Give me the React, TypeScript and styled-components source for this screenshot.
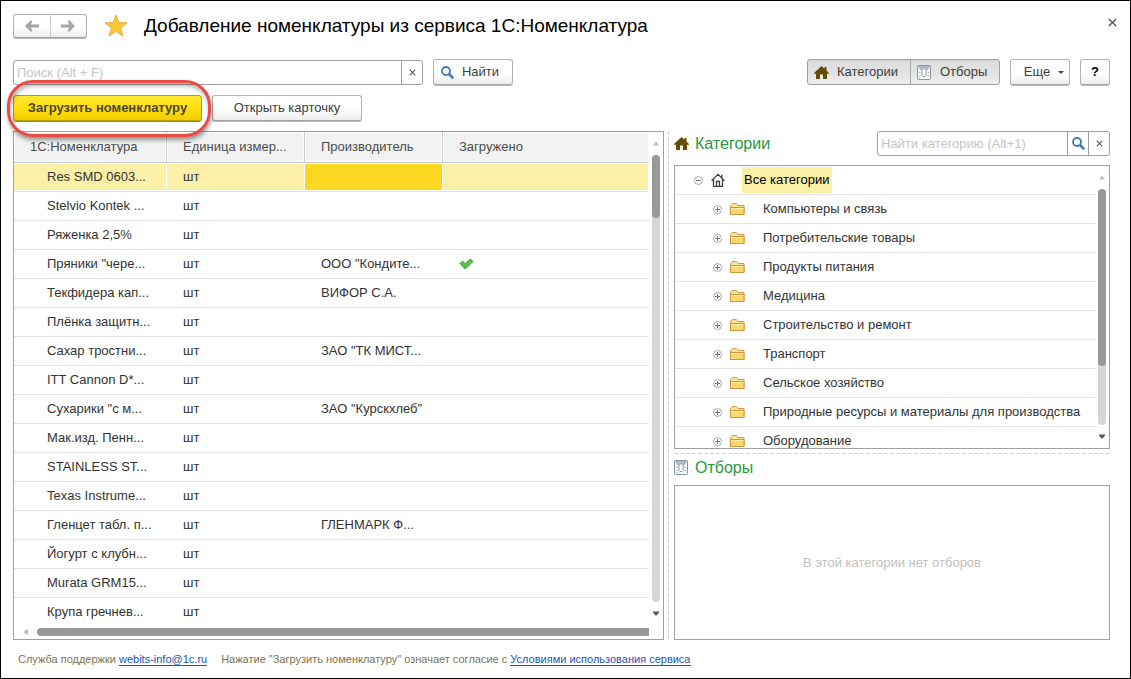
import React from 'react';
import styled, { createGlobalStyle, css } from 'styled-components';

const GlobalStyle = createGlobalStyle`
  *, *::before, *::after { box-sizing: border-box; }
  body {
    margin: 0;
    background: #fff;
    color: #333;
    font: 13px/16px "Liberation Sans", Arial, sans-serif;
  }
  button, input { font: inherit; color: inherit; }
  button { cursor: pointer; }
  svg { display: block; flex: none; }
`;

const Window = styled.div`
  display: flex;
  flex-direction: column;
  height: 100vh;
  min-height: 480px;
  padding: 12px 20px 0 12px;
  border: 1px solid #000;
`;

const TitleBar = styled.header`
  display: flex;
  align-items: center;
  height: 26px;
  margin-right: -12px;
`;

const raised = css`
  border: 1px solid #b2b2b2;
  border-bottom-color: #a0a0a0;
  border-radius: 3px;
  background: linear-gradient(#fff 50%, #eee);
  box-shadow: 0 1px 0 #bbb;
`;

const NavGroup = styled.nav`
  ${raised}
  display: flex;
  width: 74px;
  height: 24px;
`;

const NavButton = styled.button`
  display: flex;
  flex: 1;
  align-items: center;
  justify-content: center;
  padding: 0;
  border: 0;
  background: none;
  & + & { border-left: 1px solid #ccc; }
`;

const StarButton = styled.button`
  margin-left: 17px;
  padding: 0;
  border: 0;
  background: none;
`;

const Title = styled.h1`
  flex: 1;
  margin: 0 0 0 16px;
  color: #000;
  font-size: 19px;
  line-height: 26px;
  font-weight: 400;
`;

const CloseButton = styled.button`
  align-self: flex-start;
  padding: 5px;
  border: 0;
  background: none;
`;

const Toolbar = styled.div`
  display: flex;
  align-items: flex-end;
  gap: 10px;
  height: 26px;
  margin-top: 20px;
`;

const CommandRow = styled.div`
  display: flex;
  gap: 10px;
  height: 26px;
  margin: 10px 0;
`;

const Spacer = styled.span`
  flex: 1;
`;

const SearchBox = styled.div<{ $width: number }>`
  display: flex;
  width: ${(p) => p.$width}px;
  height: 25px;
  overflow: hidden;
  border: 1px solid #a0a0a0;
  border-radius: 3px;
  background: #fff;
`;

const SearchInput = styled.input`
  flex: 1;
  min-width: 0;
  padding: 0 3px;
  border: 0;
  outline: 0;
  background: none;
  &::placeholder { color: #c4c4c4; opacity: 1; }
`;

const BoxButton = styled.button`
  display: flex;
  align-items: center;
  justify-content: center;
  width: 21px;
  padding: 0;
  border: 0;
  border-left: 1px solid #a0a0a0;
  background: none;
`;

const Button = styled.button<{ $width: number }>`
  ${raised}
  display: flex;
  align-items: center;
  justify-content: center;
  gap: 8px;
  width: ${(p) => p.$width}px;
  height: 26px;
  padding: 0;
  color: #404040;
`;

const FindButton = styled(Button)`
  padding-right: 6px;
`;

const MoreButton = styled(Button)`
  padding-left: 8px;
`;

const PrimaryButton = styled(Button)`
  border-color: #b39b00;
  background: linear-gradient(#ffe833, #ffdf0e 50%, #f3cd00);
  box-shadow: 0 1px 0 #a08c20;
  color: #4d4632;
  font-weight: 700;
`;

const HelpButton = styled(Button)`
  color: #000;
  font-weight: 700;
`;

const Highlighted = styled.div`
  position: relative;
  &::after {
    content: "";
    position: absolute;
    inset: -15px -9px -16px -6px;
    border: 3px solid #e94b47;
    border-radius: 26px;
    box-shadow: 1px 3px 4px rgba(0, 0, 0, 0.4), inset 1px 3px 4px rgba(0, 0, 0, 0.3);
    pointer-events: none;
  }
`;

const ToggleGroup = styled.div`
  display: flex;
  height: 26px;
  border: 1px solid #a0a0a0;
  border-radius: 3px;
  background: linear-gradient(#d2d2d2, #dedede 10%, #e2e2e2 50%, #eee);
`;

const Toggle = styled.button<{ $width: number }>`
  display: flex;
  align-items: center;
  gap: 8px;
  width: ${(p) => p.$width}px;
  padding: 0 0 0 6px;
  border: 0;
  background: none;
  color: #404040;
  & + & { border-left: 1px solid #a8a8a8; }
`;

const Main = styled.main`
  display: grid;
  flex: 1;
  grid-template-columns: minmax(0, 651fr) 10px minmax(0, 436fr);
  min-height: 0;
`;

const Splitter = styled.div`
  width: 1px;
  margin-left: 4px;
  background: repeating-linear-gradient(#d0d0d0 0 4px, transparent 4px 6px);
`;

const TablePanel = styled.section`
  display: flex;
  flex-direction: column;
  min-height: 0;
  border: 1px solid #a0a0a0;
`;

const ScrollRow = styled.div`
  display: flex;
  flex: 1;
  min-height: 0;
`;

const ScrollArea = styled.div`
  flex: 1;
  min-width: 0;
  overflow: hidden;
`;

const Table = styled.table`
  width: 100%;
  table-layout: fixed;
  border-spacing: 0;
`;

const Th = styled.th<{ $width?: number }>`
  width: ${(p) => (p.$width ? `${p.$width}px` : 'auto')};
  height: 31px;
  padding: 0 16px;
  overflow: hidden;
  border-right: 1px solid #ccc;
  border-bottom: 1px solid #c4c4c4;
  background: #f2f2f2;
  box-shadow: inset 0 0 0 1px #fff;
  color: #4d4d4d;
  font-weight: 400;
  text-align: left;
  white-space: nowrap;
  &:last-child { border-right: 0; }
`;

const Td = styled.td<{ $current?: boolean }>`
  height: 29px;
  padding: 0 0 0 16px;
  overflow: hidden;
  border-bottom: 1px solid #e2e2e2;
  white-space: nowrap;
  &:first-child { padding-left: 33px; }
  ${(p) => p.$current && css`background: #fcd920 !important;`}
`;

const Tr = styled.tr<{ $selected?: boolean }>`
  ${(p) => p.$selected && css`
    ${Td} {
      background: #fcf0a6;
      box-shadow: inset -1px -1px 0 #fff, inset 0 1px 0 #fff;
    }
  `}
`;

const VBar = styled.div`
  display: flex;
  flex-direction: column;
  align-items: center;
  width: 14px;
  padding: 9px 1px 9px 0;
  gap: 9px;
`;

const Track = styled.div`
  flex: 1;
  width: 8px;
  border-radius: 4px;
  background: #d6d6d6;
`;

const Thumb = styled.div<{ $size: string }>`
  height: ${(p) => p.$size};
  border-radius: 4px;
  background: #999;
`;

const HBar = styled.div`
  display: flex;
  align-items: center;
  gap: 9px;
  height: 14px;
  padding: 0 14px 0 9px;
`;

const HThumb = styled.div`
  flex: 1;
  height: 8px;
  border-radius: 4px 0 0 4px;
  background: #999;
`;

const Side = styled.aside`
  display: flex;
  flex-direction: column;
  min-width: 0;
  min-height: 0;
`;

const SideHead = styled.div`
  display: flex;
  align-items: center;
  height: 25px;
  margin-bottom: 9px;
`;

const SideTitle = styled.h2`
  flex: 1;
  margin: 0 0 0 6px;
  color: #1f9a3e;
  font-size: 16px;
  line-height: 20px;
  font-weight: 400;
`;

const TreePanel = styled.div`
  display: flex;
  flex: 285 1 0;
  min-height: 0;
  border: 1px solid #a0a0a0;
`;

const Tree = styled.ul`
  margin: 0;
  padding: 0;
  list-style: none;
`;

const Node = styled.li<{ $root?: boolean }>`
  display: flex;
  align-items: center;
  height: 29px;
  padding-left: ${(p) => (p.$root ? 19 : 38)}px;
  border-bottom: 1px solid #e2e2e2;
  white-space: nowrap;
`;

const Expander = styled.button`
  margin-right: 8px;
  padding: 0;
  border: 0;
  background: none;
`;

const RootLabel = styled.span`
  margin-left: 17px;
  padding: 5px 3px 5px 2px;
  background: #fcf0a6;
  color: #000;
`;

const NodeLabel = styled.span`
  margin-left: 18px;
`;

const HSplitter = styled.div`
  flex: none;
  height: 1px;
  margin: 4px 0 1px;
  background: repeating-linear-gradient(90deg, #d0d0d0 0 4px, transparent 4px 6px);
`;

const FilterPanel = styled.div`
  display: flex;
  flex: 154 1 0;
  align-items: center;
  justify-content: center;
  min-height: 0;
  border: 1px solid #a0a0a0;
  color: #c0c0c0;
`;

const FilterHead = styled(SideHead)`
  margin-bottom: 5px;
`;

const Footer = styled.footer`
  display: flex;
  gap: 14px;
  height: 38px;
  padding: 12px 0 0 5px;
  color: #7b7452;
  font-size: 11px;
  line-height: 14px;
  white-space: nowrap;
`;

const Link = styled.a`
  border-bottom: 1px solid #1d55b4;
  color: #1d55b4;
  text-decoration: none;
`;

const Arrow = ({ flip }: { flip?: boolean }) => (
  <svg width="14" height="12" viewBox="0 0 14 12" fill="#a6a6a6">
    <path d={flip ? 'M0 4.500h8L6.500.5h2L14 6l-5.500 5.500h-2L8 7.500H0z' : 'M14 4.500H6L7.500.5h-2L0 6l5.500 5.500h2L6 7.500h8z'} />
  </svg>
);

const Star = () => (
  <svg width="24" height="24" viewBox="0 0 24 24">
    <path d="M12 1l2.800 7.600 8.200.3-6.400 5.100 2.300 8-6.900-4.600L5.100 22l2.300-8L1 8.900l8.200-.3z" fill="#fcc934" stroke="#dfae45" strokeWidth="1" />
  </svg>
);

const Cross = ({ size }: { size: number }) => (
  <svg width={size} height={size} viewBox="0 0 8 8" stroke="#555" strokeWidth="1.200">
    <path d="M.8.8l6.400 6.400M7.200.8.8 7.200" />
  </svg>
);

const Magnifier = () => (
  <svg width="13" height="13" viewBox="0 0 13 13" fill="none" stroke="#3d7ab5">
    <circle cx="5" cy="5" r="4" strokeWidth="1.800" />
    <path d="M8 8l4.200 4.200" strokeWidth="2.600" />
  </svg>
);

const House = () => (
  <svg width="15" height="13" viewBox="-1 0 15 13" fill="#664c00">
    <path d="M6.500 0 9.500 2.700V1h2v3.600L14 7v.8h-2V13H8V8.500H5V13H1V7.800h-2V7z" />
  </svg>
);

const HouseOutline = () => (
  <svg width="14" height="14" viewBox="0 0 14 14" fill="none" stroke="#404040" strokeWidth="1.300">
    <path d="M.6 7.800 7 1.400l6.400 6.400M2.500 6.500v6.900h9V6.500M5.500 13V8.500h3V13M10.800 1.500v3" />
  </svg>
);

const FilterIcon = () => (
  <svg width="15" height="15" viewBox="0 0 15 15">
    <rect x=".5" y=".5" width="13" height="14" rx="1" fill="#f7fafb" stroke="#8496a0" />
    <path d="M1.500 1.500 5 6v4.500l1 1h2l1-1V6l3.500-4.500" fill="#fff" stroke="#8496a0" />
    <path d="M1 1h12L9.500 5.500h-1L7 4 5.500 5.500h-1z" fill="#b3b6c6" />
    <path d="M2 7.500h1.500M10.500 7.500H12M10.500 10.500H12" stroke="#e88a7c" />
    <path d="M2 10.500h1.500M2 12.500h1.500" stroke="#a9c0d4" />
  </svg>
);

const Folder = () => (
  <svg width="15" height="12" viewBox="0 0 15 12">
    <path d="M.5 3 2.500.6h4L8 2.500h6v9H.5z" fill="#ffe892" stroke="#cf9540" />
    <path d="M.5 4.500H14v7H.5z" fill="#fbd86c" stroke="#cf9540" />
    <path d="M1 5.500h12.500" stroke="#ffeeaa" />
  </svg>
);

const Sign = ({ plus }: { plus?: boolean }) => (
  <svg width="9" height="9" viewBox="0 0 9 9" fill="none" stroke="#a8a8a8">
    <circle cx="4.500" cy="4.500" r="4" />
    <path d={plus ? 'M2 4.500h5M4.500 2v5' : 'M2 4.500h5'} stroke="#777" />
  </svg>
);

const Check = () => (
  <svg width="15" height="12" viewBox="0 0 15 12">
    <path d="M1 5.500 3.500 3l2.700 2.700L11.500 1 14 3.500 6.200 11z" fill="#5cc43c" stroke="#3f9a5c" />
  </svg>
);

const Triangle = ({ dir }: { dir: 'up' | 'down' | 'left' }) => {
  if (dir === 'left') {
    return <svg width="5" height="6" viewBox="0 0 5 6"><path d="M5 0v6L0 3z" fill="#bbb" /></svg>;
  }
  return (
    <svg width="6" height="5" viewBox="0 0 6 5">
      <path d={dir === 'up' ? 'M0 4.500h6L3 .5z' : 'M0 .5h6v1L3.500 4.500h-1L0 1.500z'} fill={dir === 'up' ? '#bbb' : '#555'} />
    </svg>
  );
};

const Caret = () => (
  <svg width="6" height="3" viewBox="0 0 6 3"><path d="M0 0h6L3 3z" fill="#444" /></svg>
);

const Scrollbar = ({ size }: { size: string }) => (
  <VBar>
    <Triangle dir="up" />
    <Track><Thumb $size={size} /></Track>
    <Triangle dir="down" />
  </VBar>
);

type Item = { name: string; maker?: string; loaded?: boolean };

const items: Item[] = [
  { name: 'Res SMD 0603...' },
  { name: 'Stelvio Kontek ...' },
  { name: 'Ряженка 2,5%' },
  { name: 'Пряники "чере...', maker: 'ООО "Кондите...', loaded: true },
  { name: 'Текфидера кап...', maker: 'ВИФОР С.А.' },
  { name: 'Плёнка защитн...' },
  { name: 'Сахар тростни...', maker: 'ЗАО "ТК МИСТ...' },
  { name: 'ITT Cannon D*...' },
  { name: 'Сухарики "с м...', maker: 'ЗАО "Курскхлеб"' },
  { name: 'Мак.изд. Пенн...' },
  { name: 'STAINLESS ST...' },
  { name: 'Texas Instrume...' },
  { name: 'Гленцет табл. п...', maker: 'ГЛЕНМАРК Ф...' },
  { name: 'Йогурт с клубн...' },
  { name: 'Murata GRM15...' },
  { name: 'Крупа гречнев...' },
];

const categories = [
  'Компьютеры и связь',
  'Потребительские товары',
  'Продукты питания',
  'Медицина',
  'Строительство и ремонт',
  'Транспорт',
  'Сельское хозяйство',
  'Природные ресурсы и материалы для производства',
  'Оборудование',
];

export default function App() {
  return (
    <>
      <GlobalStyle />
      <Window>
        <TitleBar>
          <NavGroup>
            <NavButton aria-label="Назад"><Arrow /></NavButton>
            <NavButton aria-label="Вперед"><Arrow flip /></NavButton>
          </NavGroup>
          <StarButton aria-label="Избранное"><Star /></StarButton>
          <Title>Добавление номенклатуры из сервиса 1С:Номенклатура</Title>
          <CloseButton aria-label="Закрыть"><Cross size={9} /></CloseButton>
        </TitleBar>

        <Toolbar>
          <SearchBox $width={410}>
            <SearchInput aria-label="Поиск" placeholder="Поиск (Alt + F)" />
            <BoxButton aria-label="Очистить"><Cross size={7} /></BoxButton>
          </SearchBox>
          <FindButton $width={80}><Magnifier />Найти</FindButton>
          <Spacer />
          <ToggleGroup>
            <Toggle $width={102} aria-pressed="true"><House />Категории</Toggle>
            <Toggle $width={89} aria-pressed="true"><FilterIcon />Отборы</Toggle>
          </ToggleGroup>
          <MoreButton $width={60}>Еще<Caret /></MoreButton>
          <HelpButton $width={30}>?</HelpButton>
        </Toolbar>

        <CommandRow>
          <Highlighted>
            <PrimaryButton $width={189}>Загрузить номенклатуру</PrimaryButton>
          </Highlighted>
          <Button $width={150}>Открыть карточку</Button>
        </CommandRow>

        <Main>
          <TablePanel>
            <ScrollRow>
              <ScrollArea>
                <Table>
                  <thead>
                    <tr>
                      <Th $width={153}>1С:Номенклатура</Th>
                      <Th $width={138}>Единица измер...</Th>
                      <Th $width={138}>Производитель</Th>
                      <Th>Загружено</Th>
                    </tr>
                  </thead>
                  <tbody>
                    {items.map((item, i) => (
                      <Tr key={item.name} $selected={i === 0}>
                        <Td>{item.name}</Td>
                        <Td>шт</Td>
                        <Td $current={i === 0}>{item.maker}</Td>
                        <Td>{item.loaded && <Check />}</Td>
                      </Tr>
                    ))}
                  </tbody>
                </Table>
              </ScrollArea>
              <Scrollbar size="14%" />
            </ScrollRow>
            <HBar>
              <Triangle dir="left" />
              <HThumb />
            </HBar>
          </TablePanel>

          <Splitter />

          <Side>
            <SideHead>
              <House />
              <SideTitle>Категории</SideTitle>
              <SearchBox $width={233}>
                <SearchInput aria-label="Найти категорию" placeholder="Найти категорию (Alt+1)" />
                <BoxButton aria-label="Искать"><Magnifier /></BoxButton>
                <BoxButton aria-label="Очистить"><Cross size={7} /></BoxButton>
              </SearchBox>
            </SideHead>
            <TreePanel>
              <ScrollArea>
                <Tree>
                  <Node $root>
                    <Expander aria-label="Свернуть"><Sign /></Expander>
                    <HouseOutline />
                    <RootLabel>Все категории</RootLabel>
                  </Node>
                  {categories.map((name) => (
                    <Node key={name}>
                      <Expander aria-label="Развернуть"><Sign plus /></Expander>
                      <Folder />
                      <NodeLabel>{name}</NodeLabel>
                    </Node>
                  ))}
                </Tree>
              </ScrollArea>
              <Scrollbar size="75%" />
            </TreePanel>
            <HSplitter />
            <FilterHead>
              <FilterIcon />
              <SideTitle>Отборы</SideTitle>
            </FilterHead>
            <FilterPanel>В этой категории нет отборов</FilterPanel>
          </Side>
        </Main>

        <Footer>
          <span>Служба поддержки <Link href="mailto:webits-info@1c.ru">webits-info@1c.ru</Link></span>
          <span>Нажатие "Загрузить номенклатуру" означает согласие с <Link href="#terms">Условиями использования сервиса</Link></span>
        </Footer>
      </Window>
    </>
  );
}
